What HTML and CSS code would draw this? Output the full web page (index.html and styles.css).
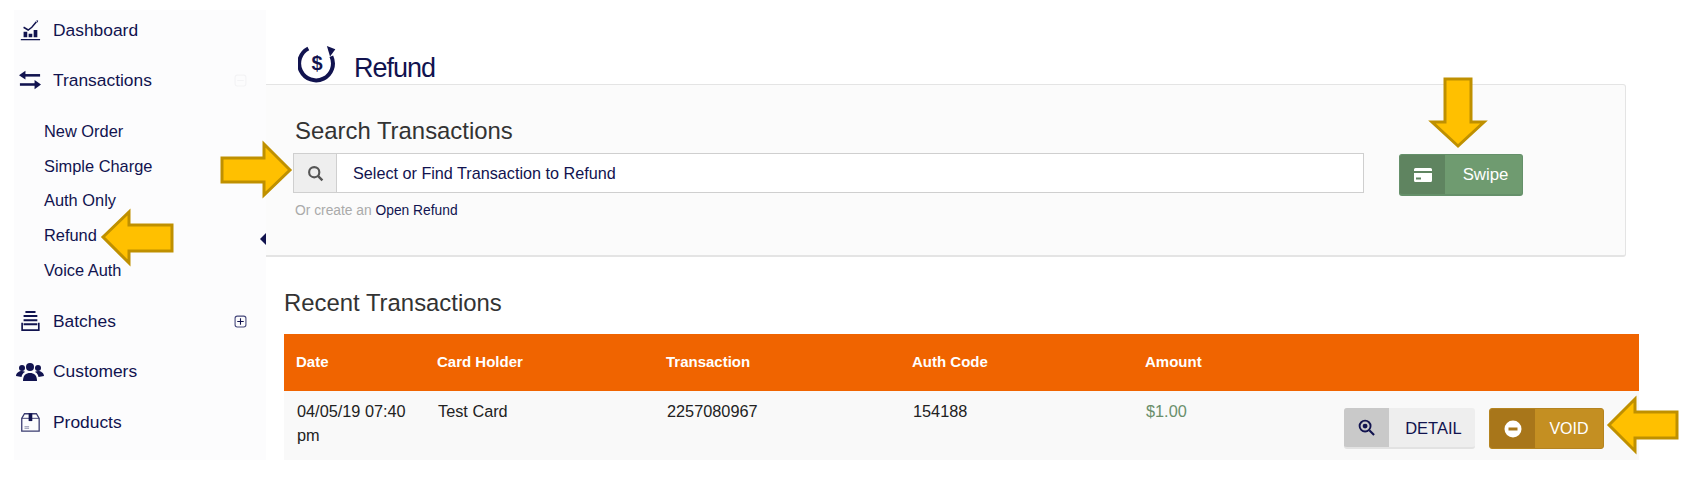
FILE: index.html

```html
<!DOCTYPE html>
<html lang="en">
<head>
    <meta charset="UTF-8">
    <title>Refund</title>
    <link rel="stylesheet" href="styles.css">
</head>
<body>
<div id="page">
    <div id="sidebar">
        <a class="navitem">
            <svg class="navicon" viewBox="0 0 24 24"><path d="M5 9l5 3 4-3 5-6" fill="none" stroke="#11134f" stroke-width="1.6"/><path d="M19 1l2 1-1 2z" fill="#11134f"/><path d="M5 14h4v6H5zM10.5 16h4v4h-4zM16 12h4v8h-4z" fill="#11134f"/><path d="M2 22.5h21" stroke="#11134f" stroke-width="1.4"/></svg>
            <span>Dashboard</span>
        </a>
        <a class="navitem">
            <svg class="navicon" viewBox="0 0 24 24"><path d="M3 5.500h20v2.800H3z" fill="#11134f"/><path d="M7 2v9.500L0 6.900z" fill="#11134f"/><path d="M1 15.500h20v2.800H1z" fill="#11134f"/><path d="M17 12v10l7-5z" fill="#11134f"/></svg>
            <span>Transactions</span>
            <span class="toggle toggle_faint"><svg viewBox="0 0 12 12"><rect x="1" y="1" width="10" height="10" rx="2" fill="none" stroke="#f3f3f5"/><path d="M3 6h6" stroke="#f3f3f5"/></svg></span>
        </a>
        <div class="subnav">
            <a>New Order</a>
            <a>Simple Charge</a>
            <a>Auth Only</a>
            <a>Refund</a>
            <a>Voice Auth</a>
        </div>
        <a class="navitem">
            <svg class="navicon" viewBox="0 0 24 24"><path d="M7 1h11v2.200H7zM5 5.500h15v2.200H5zM5 10h15v2.200H5zM5 14.500h15v2.200H5z" fill="#11134f"/><path d="M2.500 14v9h20v-9h-1.800v7H4.300v-7z" fill="#11134f"/></svg>
            <span>Batches</span>
            <span class="toggle"><svg viewBox="0 0 12 12"><rect x="1" y="1" width="10" height="10" rx="2" fill="none" stroke="#44467a"/><path d="M3 6h6M6 3v6" stroke="#11134f"/></svg></span>
        </a>
        <a class="navitem">
            <svg class="navicon navicon_wide" viewBox="0 0 28 20"><circle cx="14" cy="5" r="4" fill="#11134f"/><circle cx="6" cy="6" r="3" fill="#11134f"/><circle cx="22" cy="6" r="3" fill="#11134f"/><path d="M7 19c0-6 3-8 7-8s7 2 7 8z" fill="#11134f"/><path d="M0 14c0-3 3-5 6-5 2 0 3 1 3 1-2 1-3 2.500-3.500 5zM28 14c0-3-3-5-6-5-2 0-3 1-3 1 2 1 3 2.500 3.500 5z" fill="#11134f"/></svg>
            <span>Customers</span>
        </a>
        <a class="navitem">
            <svg class="navicon" viewBox="0 0 24 24"><path d="M3 8l3-5h13l3 5v14H3z" fill="none" stroke="#3a3c70" stroke-width="1.400"/><path d="M3 8h19" stroke="#3a3c70"/><path d="M10.500 2.500h4V11h-4z" fill="#11134f"/><path d="M6 17h5M6 19h5" stroke="#a9aac0" stroke-width="1.200"/></svg>
            <span>Products</span>
        </a>
        <span id="collapse_caret"></span>
    </div>

    <div id="main">
        <div id="title_area">
            <svg id="title_icon" viewBox="0 0 40 36">
                <path d="M27 6.500A16 16 0 1 1 4 7" fill="none" stroke="#11134f" stroke-width="3.800" transform="rotate(20 20 20)"/>
                <path d="M27 0l8 3-5 7z" fill="#11134f"/>
            </svg>
            <span id="title_dollar">$</span>
            <h1 class="title">Refund</h1>
        </div>

        <div id="search_panel">
            <div id="search_left">
                <h2 class="subtitle">Search Transactions</h2>
                <div id="search_box">
                    <span id="search_addon">
                        <svg viewBox="0 0 16 16" width="17" height="17"><circle cx="6.800" cy="6.800" r="4.800" fill="none" stroke="#555" stroke-width="2"/><path d="M10.500 10.500l4 4" stroke="#555" stroke-width="2.200"/></svg>
                    </span>
                    <span id="search_text">Select or Find Transaction to Refund</span>
                </div>
                <p id="search_hint">Or create an <a>Open Refund</a></p>
            </div>
            <a class="btn btn_swipe">
                <span class="btn_icon">
                    <svg viewBox="0 0 18 14" width="18" height="14"><path d="M0 1.500A1.500 1.500 0 0 1 1.500 0h15A1.500 1.500 0 0 1 18 1.500V3H0zM0 5h18v7.500a1.500 1.500 0 0 1-1.500 1.500h-15A1.500 1.500 0 0 1 0 12.500z" fill="#fff"/><path d="M2 9.500h5v2H2z" fill="#5f8460"/></svg>
                </span>
                <span class="btn_label">Swipe</span>
            </a>
        </div>

        <h2 class="subtitle" id="recent_title">Recent Transactions</h2>
        <table id="recent_table">
            <thead>
                <tr>
                    <th class="col_date">Date</th>
                    <th class="col_holder">Card Holder</th>
                    <th class="col_trans">Transaction</th>
                    <th class="col_auth">Auth Code</th>
                    <th class="col_amount">Amount</th>
                    <th class="col_actions"></th>
                </tr>
            </thead>
            <tbody>
                <tr>
                    <td>04/05/19 07:40 pm</td>
                    <td>Test Card</td>
                    <td>2257080967</td>
                    <td>154188</td>
                    <td class="amount">$1.00</td>
                    <td class="actions">
                        <a class="btn btn_detail">
                            <span class="btn_icon">
                                <svg viewBox="0 0 18 18" width="17" height="17"><circle cx="7.500" cy="7.500" r="5.800" fill="none" stroke="#11134f" stroke-width="2"/><circle cx="7.500" cy="7.500" r="2.600" fill="#11134f"/><path d="M12 12l5 5" stroke="#11134f" stroke-width="2.200"/></svg>
                            </span>
                            <span class="btn_label">DETAIL</span>
                        </a>
                        <a class="btn btn_void">
                            <span class="btn_icon">
                                <svg viewBox="0 0 18 18" width="18" height="18"><circle cx="9" cy="9" r="8.500" fill="#fff"/><path d="M4.500 7.500h9v3h-9z" fill="#a8761a"/></svg>
                            </span>
                            <span class="btn_label">VOID</span>
                        </a>
                    </td>
                </tr>
            </tbody>
        </table>
    </div>
</div>

<!-- callout arrows drawn over the screenshot -->
<svg id="callouts" viewBox="0 0 1695 490" width="1695" height="490">
    <polygon points="103,237 129,212 129,225 172,225 172,251 129,251 129,263"/>
    <polygon points="290,170 264,144 264,158 222,158 222,182 264,182 264,195"/>
    <polygon points="1458,146 1432,122 1445,122 1445,79 1471,79 1471,122 1484,122"/>
    <polygon points="1609,425 1635,399 1635,412 1677,412 1677,438 1635,438 1635,451"/>
</svg>
</body>
</html>
```

FILE: styles.css

```css
body {
    margin: 0;
    background-color: white;
    color: #11134f;
    font-family: "Liberation Sans", Arial, sans-serif;
    overflow: hidden;
}

#page {
    display: flex;
    align-items: flex-start;
    padding: 10px 0 0 14px;
    height: 480px;
    box-sizing: border-box;
}

a {
    color: #11134f;
    text-decoration: none;
}

/* sidebar */
#sidebar {
    position: relative;
    flex: none;
    width: 252px;
    height: 450px;
    background-color: #fcfcfd;
    box-sizing: border-box;
}

.navitem {
    display: flex;
    align-items: center;
    height: 40px;
    margin-bottom: 10.400px;
    font-size: 17.400px;
}

.navicon {
    width: 22px;
    height: 22px;
    margin-left: 5px;
    margin-right: 12px;
    flex: none;
}

.navicon_wide {
    width: 28px;
    height: 20px;
    margin-left: 2px;
    margin-right: 9px;
}

.toggle {
    margin-left: auto;
    margin-right: 19px;
    width: 13px;
    height: 13px;
}

.toggle svg {
    display: block;
}

.subnav {
    display: flex;
    flex-direction: column;
    padding-top: 3.500px;
    padding-left: 30px;
    margin-bottom: 14px;
    font-size: 16.400px;
}

.subnav a {
    height: 34.600px;
    line-height: 34.600px;
}

#collapse_caret {
    position: absolute;
    right: 0;
    top: 223px;
    border-style: solid;
    border-width: 6px 6px 6px 0;
    border-color: transparent #11134f transparent transparent;
}

/* main area */
#main {
    flex: 1;
    min-width: 0;
}

#title_area {
    position: relative;
    display: flex;
    align-items: flex-end;
    height: 74px;
    padding-left: 32px;
    box-sizing: border-box;
}

#title_icon {
    width: 43px;
    height: 38px;
    margin-right: 13px;
    margin-bottom: 0;
}

#title_dollar {
    position: absolute;
    left: 44px;
    top: 42px;
    width: 14px;
    text-align: center;
    font-size: 20px;
    font-weight: bold;
}

.title {
    margin: 0 0 -2px 0;
    font-size: 27px;
    font-weight: normal;
    letter-spacing: -1px;
    line-height: 36px;
}

#search_panel {
    display: flex;
    align-items: flex-start;
    width: 1360px;
    height: 173px;
    box-sizing: border-box;
    background-color: #fbfbfb;
    border: 1px solid #e4e4e4;
    border-left: none;
    border-bottom-width: 2px;
    border-radius: 0 3px 3px 0;
    padding: 33px 0 0 29px;
}

#search_left {
    width: 1069px;
    margin-right: 35px;
}

.subtitle {
    margin: 0;
    font-size: 23.900px;
    font-weight: normal;
    line-height: 26px;
    color: #333;
}

#search_box {
    display: flex;
    align-items: center;
    height: 40px;
    margin-top: 9px;
    margin-left: -2px;
    box-sizing: border-box;
    background-color: white;
    border: 1px solid #cfcfcf;
}

#search_addon {
    display: flex;
    align-items: center;
    justify-content: center;
    width: 42px;
    height: 100%;
    background-color: #eeeeee;
    border-right: 1px solid #cfcfcf;
}

#search_text {
    padding-left: 16px;
    font-size: 16.200px;
}

#search_hint {
    margin: 9px 0 0 0;
    font-size: 13.800px;
    line-height: 18px;
    color: #aaaaaa;
}

#recent_title {
    margin: 33px 0 0 18px;
    height: 44px;
}

/* table */
#recent_table {
    margin-left: 18px;
    width: 1355px;
    table-layout: fixed;
    border-collapse: collapse;
    font-size: 16.300px;
    color: #222;
}

#recent_table th {
    height: 57px;
    padding: 0 0 3px 12px;
    box-sizing: border-box;
    background-color: #f06400;
    color: white;
    font-size: 15px;
    text-align: left;
}

#recent_table td {
    height: 69px;
    padding: 8px 0 0 13px;
    box-sizing: border-box;
    vertical-align: top;
    background-color: #f9f9f9;
    line-height: 24px;
}

.col_date { width: 141px; }
.col_holder { width: 229px; }
.col_trans { width: 246px; }
.col_auth { width: 233px; }
.col_amount { width: 120px; }
.col_actions { width: 386px; }

#recent_table td.amount {
    color: #6a8f6b;
}

#recent_table td.actions {
    padding: 17px 35px 0 0;
    text-align: right;
    white-space: nowrap;
}

/* buttons */
.btn {
    display: inline-flex;
    align-items: stretch;
    box-sizing: border-box;
    height: 41px;
    border-radius: 3px;
    overflow: hidden;
    font-size: 16px;
    vertical-align: top;
}

.btn_icon {
    display: flex;
    align-items: center;
    justify-content: center;
    width: 45px;
    flex: none;
}

.btn_label {
    flex: 1;
    display: flex;
    align-items: center;
    justify-content: center;
}

.btn_swipe {
    width: 124px;
    height: 42px;
    margin-top: 36px;
    background-color: #6f9b70;
    color: white;
    border: 1px solid #65906a;
    border-bottom-width: 2px;
    font-size: 16.800px;
}

.btn_swipe .btn_icon {
    background-color: #5f8460;
}

.btn_swipe .btn_label {
    padding-left: 4px;
}

.btn_detail {
    width: 131px;
    margin-right: 9px;
    background-color: #eeeeee;
    border-bottom: 2px solid #e2e2e2;
    font-size: 16.500px;
}

.btn_detail .btn_icon {
    background-color: #c9c9c9;
}

.btn_detail .btn_label {
    padding-left: 2px;
}

.btn_void {
    width: 115px;
    background-color: #c48f22;
    color: white;
    border: 1px solid #b58420;
}

.btn_void .btn_icon {
    background-color: #a8761a;
}

/* arrows */
#callouts {
    position: absolute;
    left: 0;
    top: 0;
    pointer-events: none;
}

#callouts polygon {
    fill: #ffc000;
    stroke: #bf9000;
    stroke-width: 3;
}
```
